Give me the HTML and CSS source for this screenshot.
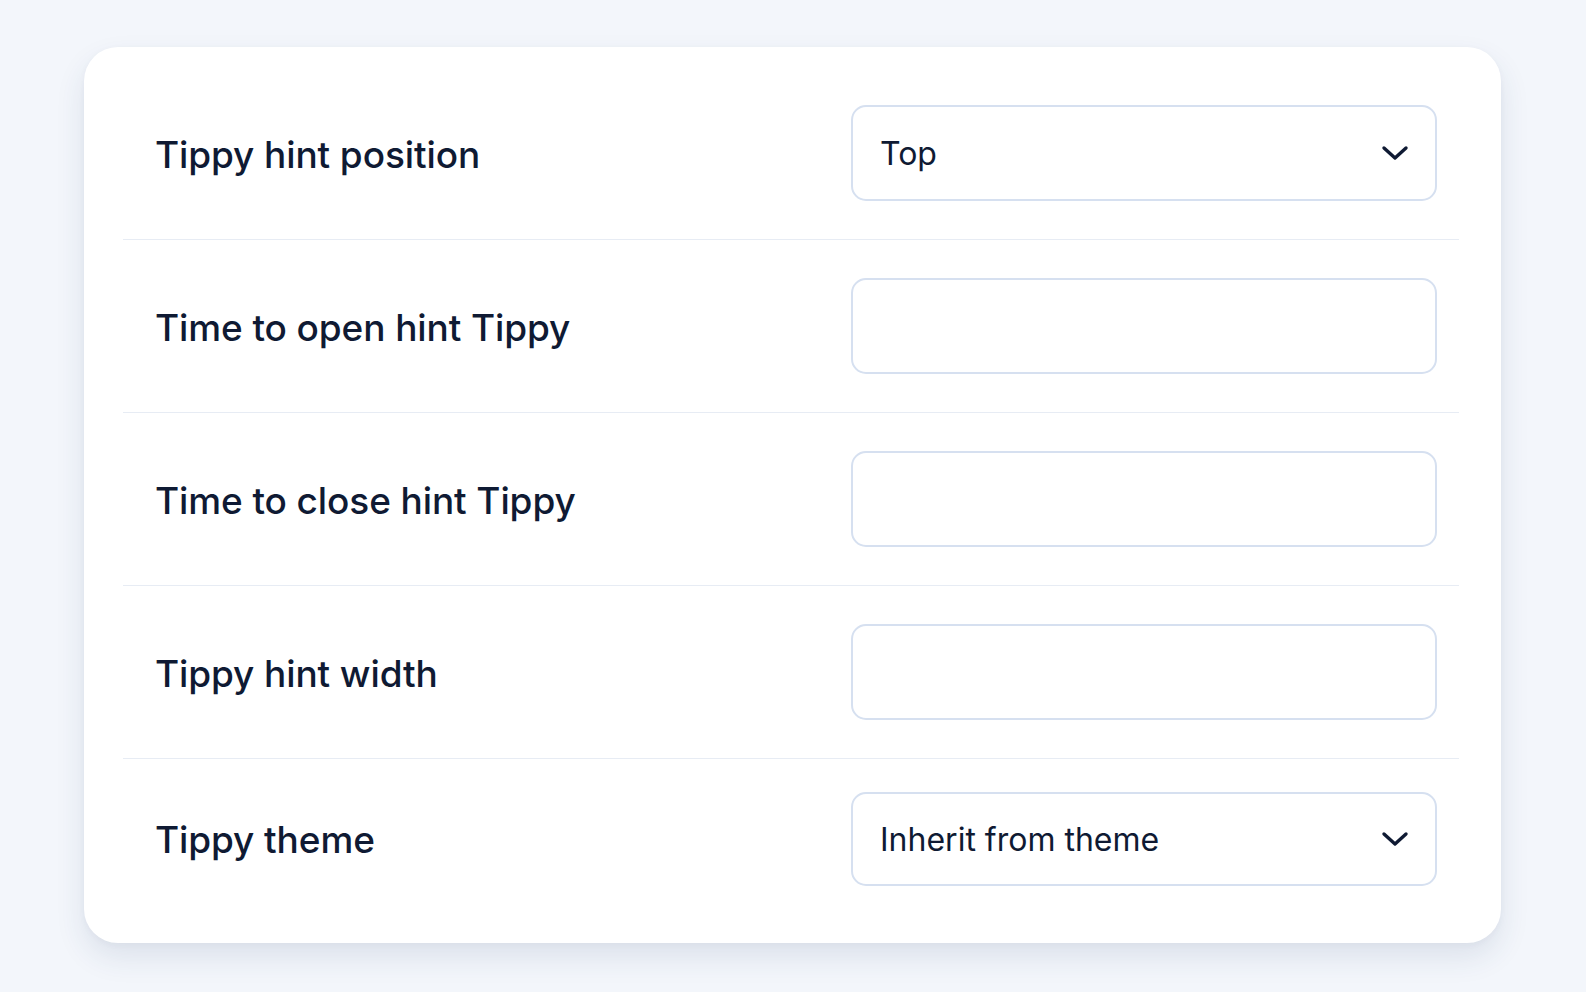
FILE: index.html
```html
<!DOCTYPE html>
<html>
    <head>
        <title>Tippy settings</title>
        <link rel="stylesheet" href="styles.css">
    </head>
    <body>
        <div class="card">

            <!--POSITION-->
            <div class="row">
                <label class="label">Tippy hint position</label>
                <div class="field select">
                    <span>Top</span>
                    <svg class="chevron" viewBox="0 0 28 16" width="28" height="16"><path d="M3 3 L14 13 L25 3" fill="none" stroke="#0f1a33" stroke-width="3.4" stroke-linecap="round" stroke-linejoin="round"/></svg>
                </div>
            </div>

            <!--OPEN TIME-->
            <div class="row">
                <label class="label">Time to open hint Tippy</label>
                <input type="text" class="field">
            </div>

            <!--CLOSE TIME-->
            <div class="row">
                <label class="label">Time to close hint Tippy</label>
                <input type="text" class="field">
            </div>

            <!--WIDTH-->
            <div class="row">
                <label class="label">Tippy hint width</label>
                <input type="text" class="field">
            </div>

            <!--THEME-->
            <div class="row last">
                <label class="label">Tippy theme</label>
                <div class="field select short">
                    <span>Inherit from theme</span>
                    <svg class="chevron" viewBox="0 0 28 16" width="28" height="16"><path d="M3 3 L14 13 L25 3" fill="none" stroke="#0f1a33" stroke-width="3.4" stroke-linecap="round" stroke-linejoin="round"/></svg>
                </div>
            </div>

        </div>
    </body>
</html>
```

FILE: styles.css
```css
body{
    margin: 0;
    padding-bottom: 40px;
    background-color: #f3f6fb;
    font-family: Inter, "Noto Sans", sans-serif;
    color: #0f1a33;
}

.card{
    margin: 47px 85px 0 84px;
    height: 896px;
    box-sizing: border-box;
    background-color: white;
    border-radius: 34px;
    padding: 20px 42px 23px 39px;
    box-shadow: 0 14px 30px rgba(40, 60, 110, 0.11), 0 2px 6px rgba(40, 60, 110, 0.04);
}

.row{
    height: 172px;
    border-bottom: 1px solid #e7ecf4;
    display: flex;
    align-items: center;
    justify-content: space-between;
    padding: 0 22px 0 32px;
}

.row.last{
    height: 160px;
    border-bottom: none;
}

.label{
    font-size: 37px;
    font-weight: 500;
    letter-spacing: -0.1px;
    padding-top: 3px;
}

.row.last .label{
    padding-top: 0;
}

.field{
    width: 586px;
    height: 96px;
    box-sizing: border-box;
    border: 2px solid #d6e0f0;
    border-radius: 15px;
    background: white;
    font-family: inherit;
    font-size: 32px;
    color: #0f1a33;
    padding: 0 26px 0 27px;
    outline: none;
}

.select{
    display: flex;
    align-items: center;
    justify-content: space-between;
}

.select.short{
    height: 94px;
}

.chevron{
    display: block;
}
```
